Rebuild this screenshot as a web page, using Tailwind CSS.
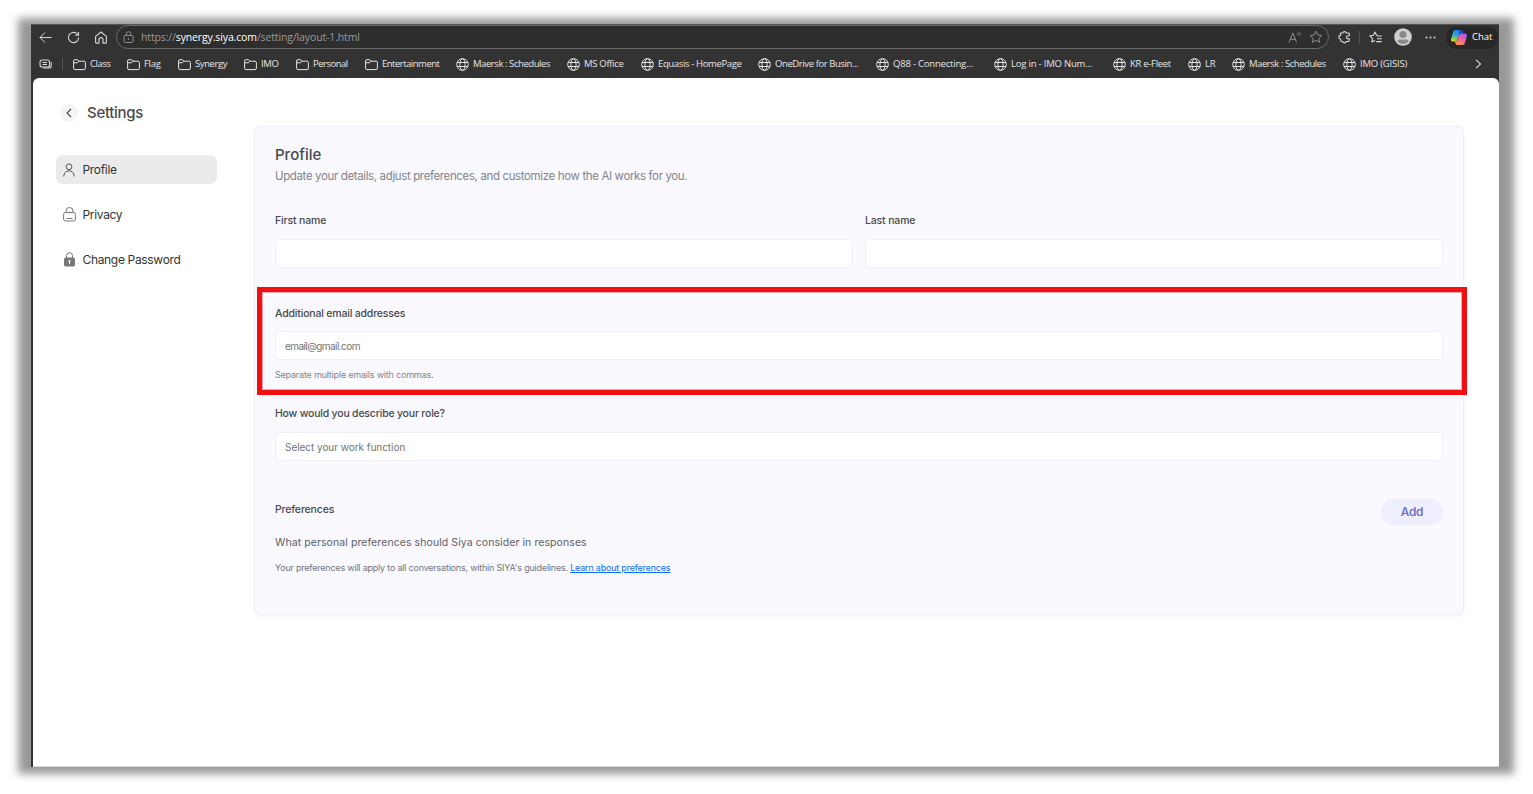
<!DOCTYPE html>
<html lang="en">
<head>
    <meta charset="UTF-8">
    <meta name="viewport" content="width=device-width, initial-scale=1.0">
    <title>Settings</title>
    <script src="https://cdn.jsdelivr.net/npm/@tailwindcss/browser@4"></script>
</head>
<body class="relative h-screen overflow-hidden bg-white pl-[31px] pt-6">

    <!-- Window shadow -->
    <div class="absolute left-[18px] top-[18px] h-[756px] w-[1496px] bg-[#989898] blur-[4px]"></div>

    <!-- Browser window -->
    <div class="relative flex h-[743px] w-[1468px] flex-col bg-[#333333] font-['Open_Sans',sans-serif] text-[#d8d8d8]">

        <!-- Address Bar -->
        <div class="flex h-[26px] items-center border-t border-[#555] pb-px pl-2">
            <svg class="h-[13px] w-[13px]" viewBox="0 0 13 13" fill="none" stroke="currentColor" stroke-width="1"><path d="M12.5 6.5H1M6 1.5l-5 5 5 5"/></svg>
            <svg class="ml-[15px] h-[13px] w-[13px]" viewBox="0 0 13 13" fill="none" stroke="currentColor" stroke-width="1.1"><path d="M11.6 6.5a5.1 5.1 0 1 1-1.7-3.8L11.4 4M11.5 1v3.2H8.3"/></svg>
            <svg class="ml-[14px] h-[13px] w-[14px]" viewBox="0 0 14 13" fill="none" stroke="currentColor" stroke-width="1.1" stroke-linejoin="round"><path d="M1.6 5.4 7 1l5.4 4.4v6.1a.6.6 0 0 1-.6.6H9V8.6a2 2 0 0 0-4 0v3.5H2.2a.6.6 0 0 1-.6-.6z"/></svg>
            <div class="ml-[8px] flex h-[24px] w-[1213px] items-center rounded-full border border-[#6a6a6a] bg-[#2e2e2e] pl-[6px] pr-[5px]">
                <svg class="h-[13px] w-[11px] text-[#8d8d8d]" viewBox="0 0 11 13" fill="none" stroke="currentColor"><rect x="1" y="4.5" width="9" height="7" rx="1.2"/><path d="M3.2 4.5V3a2.3 2.3 0 0 1 4.6 0v1.5"/><circle cx="5.5" cy="8" r=".5" fill="currentColor"/></svg>
                <span class="ml-[7px] pt-px text-[10.5px] tracking-[-0.13px] text-[#9b9b9b]">https://<span class="text-white">synergy.siya.com</span>/setting/layout-1.html</span>
                <svg class="ml-auto h-[13px] w-[14px] text-[#8d8d8d]" viewBox="0 0 14 13" fill="none" stroke="currentColor"><path d="M1 11.5 4.8 2l3.8 9.5M2.3 8.3h5M8.8 2.2c.9.5 1.3 1.3 1.3 2.3M10.4.8c1.3.8 2 2 2 3.6"/></svg>
                <svg class="ml-[7px] h-[14px] w-[14px] text-[#8d8d8d]" viewBox="0 0 14 14" fill="none" stroke="currentColor" stroke-linejoin="round"><path d="m7 1.2 1.8 3.7 4 .6-2.9 2.8.7 4L7 10.4l-3.6 1.9.7-4-2.9-2.8 4-.6z"/></svg>
            </div>
            <svg class="ml-[9px] h-[14px] w-[13px]" viewBox="0 0 13 14" fill="none" stroke="currentColor" stroke-width="1.1" stroke-linejoin="round"><path d="M2.6 3h2.1a1.8 1.8 0 0 1 3.5 0h2.2q.9 0 .9.9v1.8H10a1.5 1.5 0 0 0 0 3h1.3v1.9q0 .9-.9.9H8.2a1.8 1.8 0 0 1-3.5 0H3.5q-.9 0-.9-.9V9a1.8 1.8 0 0 1 0-3.6z"/></svg>
            <span class="ml-[8px] h-[12px] w-px bg-[#555]"></span>
            <svg class="ml-[9px] h-[13px] w-[13px]" viewBox="0 0 13 13" fill="none" stroke="currentColor" stroke-width="1.1" stroke-linejoin="round"><path d="M8.2 4.4 7.6 4.3 6 1 4.4 4.3.8 4.9l2.6 2.5-.6 3.6L6 9.4M8 5h4.8M8 7.8h4.8M7.2 10.6h5.6"/></svg>
            <svg class="ml-3 h-[18px] w-[18px]" viewBox="0 0 18 18"><circle cx="9" cy="9" r="8.8" fill="#d2d0ce"/><circle cx="9" cy="6.5" r="3.6" fill="#8c8a88"/><path d="M3.4 13.6q0-2.2 2.2-2.2h6.8q2.2 0 2.2 2.2Q12.6 16 9 16t-5.6-2.4" fill="#8c8a88"/></svg>
            <svg class="ml-[13px] h-[3px] w-[11px]" viewBox="0 0 11 3" fill="currentColor"><circle cx="1.5" cy="1.5" r="1"/><circle cx="5.5" cy="1.5" r="1"/><circle cx="9.5" cy="1.5" r="1"/></svg>
            <div class="ml-[10px] flex h-[23px] w-[52px] items-center rounded-full bg-[#272727] pl-[4px]">
                <svg class="h-[17px] w-[18px] shrink-0" viewBox="0 0 17 17">
                    <defs>
                        <linearGradient id="cool" x1=".6" y1="0" x2=".3" y2="1"><stop offset="0" stop-color="#1e78f0"/><stop offset=".4" stop-color="#22a6e4"/><stop offset=".65" stop-color="#4cc37a"/><stop offset="1" stop-color="#f2d81e"/></linearGradient>
                        <linearGradient id="warm" x1=".8" y1="0" x2=".3" y2="1"><stop offset="0" stop-color="#a35cf0"/><stop offset=".5" stop-color="#f05fa5"/><stop offset="1" stop-color="#ff9a3c"/></linearGradient>
                    </defs>
                    <path d="M12.2 16H7q-1.5 0-2-1.5l-.7-1.9h.6q1.4 0 1.9-1.5L8.4 6q.5-1.4 1.9-1.4h4.2q2.3 0 1.9 2.5l-2 7q-.6 1.9-2.2 1.9z" fill="url(#warm)"/>
                    <path d="M4.8 1H10q1.5 0 2 1.5l.7 2.2H10q-1.5 0-2 1.6l-1.6 5q-.4 1.3-1.7 1.3H2.5Q.2 12.6.6 10L2.6 3q.5-2 2.2-2z" fill="url(#cool)"/>
                    <path d="M8.5 1H10q1.5 0 2 1.5l.7 2.2H10q-1.3 0-1.8 1z" fill="#1a50c8"/>
                </svg>
                <span class="ml-[4px] text-[9.5px] text-white">Chat</span>
            </div>
        </div>

        <!-- Bookmarks Bar -->
        <div class="flex h-[28px] items-center pl-2">
            <svg class="h-[10px] w-[13px]" viewBox="0 0 13 10" fill="none" stroke="currentColor" stroke-width="1.1"><rect x="1" y="1" width="9.5" height="7" rx="2"/><path d="M3.5 3.5H8M3.5 5.5H8M12.2 3v4q0 2-2 2H4"/></svg>
            <span class="ml-[10px] h-[12px] w-px bg-[#585858]"></span>
            <div id="bookmarks" class="ml-[10px] flex text-[9.5px] text-[#e6e6e6]"></div>
            <svg class="ml-auto mr-[17px] h-[10px] w-[7px]" viewBox="0 0 7 10" fill="none" stroke="currentColor" stroke-width="1.1"><path d="m1 .8 4.5 4.2L1 9.2"/></svg>
        </div>

        <!-- Page -->
        <div class="ml-[2px] flex flex-1 rounded-t-[6px] border-b border-[#d8d8d8] bg-white font-['Inter',sans-serif] text-[#4a4a4a]">

            <!-- Sidebar -->
            <div class="w-[221px] shrink-0 pl-[23px] pt-[26px]">
                <div class="flex h-[18px] items-center pl-1">
                    <span class="flex h-[18px] w-[18px] items-center justify-center rounded-full bg-[#f5f5f5]">
                        <svg class="h-[10px] w-[6px]" viewBox="0 0 6 10" fill="none" stroke="currentColor" stroke-width="1.2"><path d="M5 1 1 5l4 4"/></svg>
                    </span>
                    <h1 class="ml-[9px] text-[15px] font-medium tracking-[-0.3px]">Settings</h1>
                </div>

                <nav class="mt-[33px] flex w-[161px] flex-col gap-4 text-[12px] tracking-[-0.33px] text-[#333]">
                    <a class="flex h-[29px] items-center rounded-[7px] bg-[#ebebeb] pl-[7px]">
                        <svg class="h-[14px] w-[12px]" viewBox="0 0 12 14" fill="none" stroke="#555"><circle cx="6" cy="3.8" r="2.9"/><path d="M.8 13.5V13a5.2 5.2 0 0 1 10.4 0v.5"/></svg>
                        <span class="ml-[7.5px] pt-px">Profile</span>
                    </a>
                    <a class="flex h-[29px] items-center rounded-[7px] pl-[7px]">
                        <svg class="h-[15px] w-[13px]" viewBox="0 0 13 15" fill="none" stroke="#777"><rect x=".6" y="5.5" width="11.8" height="8.5" rx="2"/><path d="M3 5.5V4a3.5 3.5 0 0 1 7 0v1.5M3.5 11.5h6"/></svg>
                        <span class="ml-[6.5px] pt-px">Privacy</span>
                    </a>
                    <a class="flex h-[29px] items-center rounded-[7px] pl-[8px]">
                        <svg class="h-[15px] w-[11px]" viewBox="0 0 11 15"><path d="M2.5 6V3.7a3 3 0 0 1 6 0V6" fill="none" stroke="#777"/><rect y="5.5" width="11" height="9" rx="1.8" fill="#777"/><circle cx="5.5" cy="9" r="1" fill="#fff"/><path d="M5.5 9v3" stroke="#fff"/></svg>
                        <span class="ml-[7.5px] pt-px">Change Password</span>
                    </a>
                </nav>
            </div>

            <!-- Profile Card -->
            <div class="relative mt-[48px] h-[489px] w-[1210px] rounded-[6px] border border-[#efeffb] bg-[#f9f9ff] px-5 pt-[15px] shadow-[0_1px_3px_rgba(90,90,180,0.07)]">
                <h2 class="h-6 pt-px text-[15px] font-medium leading-6">Profile</h2>
                <p class="h-5 text-[11.5px] leading-5 tracking-[-0.37px] text-[#858589]">Update your details, adjust preferences, and customize how the AI works for you.</p>

                <div class="mt-6 grid grid-cols-2 gap-3 text-[10.5px] font-medium tracking-[-0.15px]">
                    <div>
                        <label class="block h-5 pt-px leading-5">First name</label>
                        <div class="mt-[9px] h-[29px] rounded-[4px] border border-[#f0f0f6] bg-white"></div>
                    </div>
                    <div>
                        <label class="block h-5 pt-px leading-5">Last name</label>
                        <div class="mt-[9px] h-[29px] rounded-[4px] border border-[#f0f0f6] bg-white"></div>
                    </div>
                </div>

                <label class="mt-[35px] block h-5 pt-px text-[10.5px] font-medium leading-5 tracking-[-0.18px]">Additional email addresses</label>
                <div class="mt-[8px] flex h-[29px] items-center rounded-[4px] border border-[#f0f0f6] bg-white pl-[9px] pt-0.5 text-[10px] tracking-[-0.57px] text-[#757575]">email@gmail.com</div>
                <p class="mt-[5px] h-5 text-[9px] leading-5 tracking-[-0.2px] text-[#858589]">Separate multiple emails with commas.</p>

                <label class="mt-[18px] block h-5 pt-px text-[10.5px] font-medium leading-5 tracking-[-0.2px]">How would you describe your role?</label>
                <div class="mt-[9px] flex h-[29px] items-center rounded-[4px] border border-[#f0f0f6] bg-white pl-[9px] pt-px text-[10px] tracking-[-0.04px] text-[#757575]">Select your work function</div>

                <div class="mt-[38px] flex items-start justify-between">
                    <div>
                        <h3 class="h-5 pt-px text-[10.5px] font-medium leading-5 tracking-[-0.15px]">Preferences</h3>
                        <p class="mt-[13px] h-5 pt-px text-[10.5px] leading-5 tracking-[0.08px] text-[#5f5f63]">What personal preferences should Siya consider in responses</p>
                        <p class="mt-[6px] h-5 text-[9px] leading-5 tracking-[-0.21px] text-[#757579]">Your preferences will apply to all conversations, within SIYA's guidelines. <a class="text-[#0d6efd] underline">Learn about preferences</a></p>
                    </div>
                    <button class="h-[26px] w-[62px] rounded-full bg-[#eeeeff] text-[12px] font-medium tracking-[-0.3px] text-[#6565c8]">Add</button>
                </div>

                <!-- Highlight around the email field -->
                <div class="absolute left-[2px] top-[160px] h-[108px] w-[1210px] border-5 border-[#ef1111] shadow-[inset_0_0_0_1px_rgba(239,17,17,0.35)]"></div>
            </div>
        </div>
    </div>

    <!-- Bookmark icons -->
    <template id="folder">
        <svg class="mr-1 h-[13px] w-[13px] shrink-0" viewBox="0 0 13 13" fill="none" stroke="currentColor" stroke-linejoin="round"><path d="M.6 3q0-1.3 1.3-1.3h2.6L6 3.2h5q1.4 0 1.4 1.4v5.6q0 1.4-1.4 1.4H2Q.6 11.6.6 10.2zM.6 4.8h3.7L6 3.2"/></svg>
    </template>
    <template id="globe">
        <svg class="mr-1 h-[13px] w-[13px] shrink-0" viewBox="0 0 13 13" fill="none" stroke="currentColor"><circle cx="6.5" cy="6.5" r="5.8"/><ellipse cx="6.5" cy="6.5" rx="2.6" ry="5.8"/><path d="M1.2 4.5h10.6M1.2 8.5h10.6"/></svg>
    </template>

    <script>
        // icon, title, slot width, letter spacing
        const bookmarks = [
            ["folder", "Class", 54, -0.4],
            ["folder", "Flag", 51, -0.3],
            ["folder", "Synergy", 66, -0.4],
            ["folder", "IMO", 52, -0.3],
            ["folder", "Personal", 69, -0.5],
            ["folder", "Entertainment", 91, -0.5],
            ["globe", "Maersk : Schedules", 111, -0.43],
            ["globe", "MS Office", 74, -0.3],
            ["globe", "Equasis - HomePage", 117, -0.36],
            ["globe", "OneDrive for Busin...", 118, -0.4],
            ["globe", "Q88 - Connecting...", 118, -0.2],
            ["globe", "Log in - IMO Num...", 119, -0.2],
            ["globe", "KR e-Fleet", 75, -0.3],
            ["globe", "LR", 44, -0.3],
            ["globe", "Maersk : Schedules", 111, -0.45],
            ["globe", "IMO (GISIS)", 70, -0.2]
        ];

        document.getElementById("bookmarks").innerHTML = bookmarks.map(([icon, title, width, spacing]) => `
            <div class="flex shrink-0 items-center whitespace-nowrap" style="width:${width}px;letter-spacing:${spacing}px">
                ${document.getElementById(icon).innerHTML}<span>${title}</span>
            </div>`).join("");
    </script>

</body>
</html>
